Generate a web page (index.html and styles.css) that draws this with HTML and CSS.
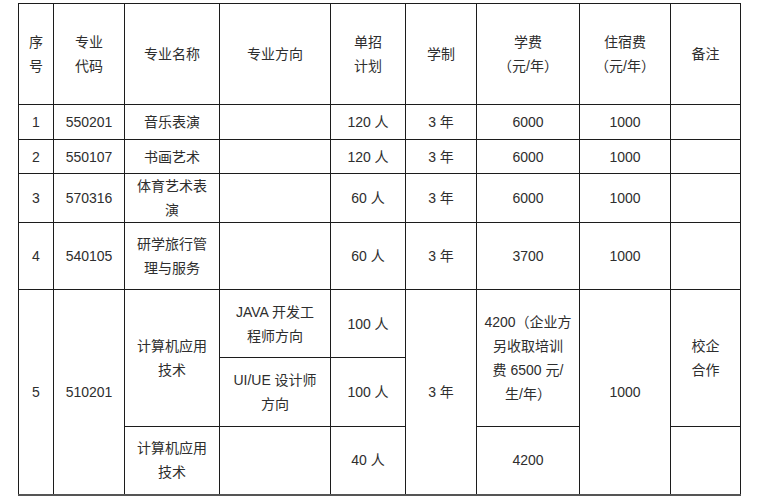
FILE: index.html
```html
<!DOCTYPE html>
<html lang="zh-CN">
<head>
<meta charset="utf-8">
<title>招生计划</title>
<link rel="stylesheet" href="styles.css">
</head>
<body>
<table class="plan">
  <colgroup>
    <col class="c1"><col class="c2"><col class="c3"><col class="c4"><col class="c5">
    <col class="c6"><col class="c7"><col class="c8"><col class="c9">
  </colgroup>
  <tr class="r-head">
    <td>序<br>号</td>
    <td>专业<br>代码</td>
    <td>专业名称</td>
    <td>专业方向</td>
    <td>单招<br>计划</td>
    <td>学制</td>
    <td>学费<br>（元/年）</td>
    <td>住宿费<br>（元/年）</td>
    <td>备注</td>
  </tr>
  <tr class="r-a">
    <td>1</td><td>550201</td><td>音乐表演</td><td></td><td>120 人</td><td>3 年</td><td>6000</td><td>1000</td><td></td>
  </tr>
  <tr class="r-b">
    <td>2</td><td>550107</td><td>书画艺术</td><td></td><td>120 人</td><td>3 年</td><td>6000</td><td>1000</td><td></td>
  </tr>
  <tr class="r-c">
    <td>3</td><td>570316</td><td>体育艺术表<br>演</td><td></td><td>60 人</td><td>3 年</td><td>6000</td><td>1000</td><td></td>
  </tr>
  <tr class="r-d">
    <td>4</td><td>540105</td><td>研学旅行管<br>理与服务</td><td></td><td>60 人</td><td>3 年</td><td>3700</td><td>1000</td><td></td>
  </tr>
  <tr class="r-e">
    <td rowspan="3">5</td>
    <td rowspan="3">510201</td>
    <td rowspan="2">计算机应用<br>技术</td>
    <td>JAVA 开发工<br>程师方向</td>
    <td>100 人</td>
    <td rowspan="3">3 年</td>
    <td rowspan="2">4200（企业方<br>另收取培训<br>费 6500 元/<br>生/年）</td>
    <td rowspan="3">1000</td>
    <td rowspan="2">校企<br>合作</td>
  </tr>
  <tr class="r-f">
    <td>UI/UE 设计师<br>方向</td>
    <td>100 人</td>
  </tr>
  <tr class="r-g">
    <td>计算机应用<br>技术</td>
    <td></td>
    <td>40 人</td>
    <td>4200</td>
    <td></td>
  </tr>
</table>
</body>
</html>
```

FILE: styles.css
```css
html, body {
  margin: 0;
  padding: 0;
  background: #ffffff;
}

body {
  padding: 3px 0 0 18px;
  font-family: "Liberation Sans", "Noto Sans CJK SC", sans-serif;
  font-size: 14px;
  color: #2e2e2e;
}

.plan {
  border-collapse: collapse;
  table-layout: fixed;
  width: 723px;
}

.plan td {
  border: 1px solid #1c1c1c;
  padding: 0 4px;
  text-align: center;
  vertical-align: middle;
  line-height: 24px;
  white-space: nowrap;
  text-spacing-trim: space-all;
  font-feature-settings: "halt" 0;
}

.plan tr:last-child td,
.plan td[rowspan="3"] {
  border-bottom: 2px solid #555555;
}

.c1 { width: 35px; }
.c2 { width: 71px; }
.c3 { width: 95px; }
.c4 { width: 111px; }
.c5 { width: 75px; }
.c6 { width: 71px; }
.c7 { width: 103px; }
.c8 { width: 91px; }
.c9 { width: 70px; }

.r-head { height: 101px; }
.r-a { height: 35px; }
.r-b { height: 34px; }
.r-c { height: 49px; }
.r-d { height: 67px; }
.r-e { height: 68px; }
.r-f { height: 69px; }
.r-g { height: 68px; }
```
